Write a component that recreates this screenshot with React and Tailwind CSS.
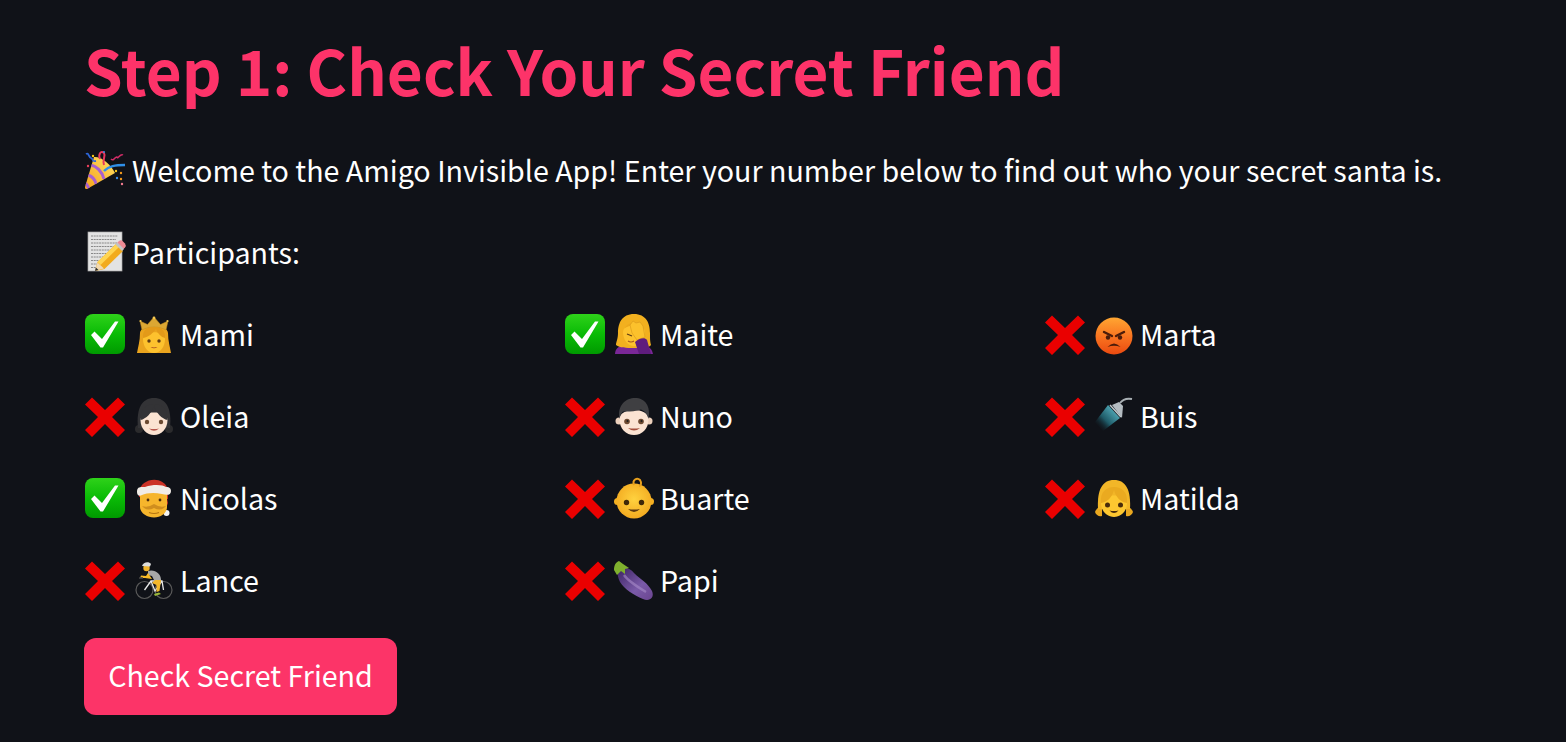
import React from 'react';

const Slot = ({ children }) => (
  <svg viewBox="0 0 40 40" className="w-10 h-10 shrink-0 overflow-visible">{children}</svg>
);

const Check = () => (
  <Slot>
    <defs>
      <linearGradient id="chk" x1="0" y1="0" x2="0" y2="1">
        <stop offset="0" stopColor="#2fd21a" />
        <stop offset="0.5" stopColor="#0abb06" />
        <stop offset="1" stopColor="#009a00" />
      </linearGradient>
    </defs>
    <rect x="0" y="-1" width="40" height="40" rx="8" fill="url(#chk)" />
    <path d="M6 20 L9.500 16.500 L17 24 L30 6.500 L33.500 6.500 L18 32.500 L15.500 32.500 Z" fill="#fff" />
  </Slot>
);

const Cross = () => (
  <Slot>
    <path d="M0 7.500 L7 0.500 L20 13 L33 0.500 L40 7.500 L27 20 L40 33 L33 40 L20 27 L7 40 L0 33 L13 20 Z" fill="#ea0000" />
  </Slot>
);

const Party = () => (
  <Slot>
    <defs>
      <linearGradient id="cone" x1="0" y1="1" x2="1" y2="0">
        <stop offset="0" stopColor="#f5a21b" />
        <stop offset="1" stopColor="#ffe066" />
      </linearGradient>
      <clipPath id="conec"><path d="M0 36 L9 6 C15 5 26 13 30 22 L2 38 Z" /></clipPath>
    </defs>
    <path d="M0 36 Q-0.500 38.500 2 38 L30 22 C26 13 15 5 9 6 Z" fill="url(#cone)" />
    <g clipPath="url(#conec)" stroke="#a85fd0" strokeWidth="3" fill="none">
      <path d="M6 14 C11 15 17 20 19 28" />
      <path d="M3 24 C6 25 10 28 11 33" />
      <path d="M0 32 C2 33 3 35 4 38" />
    </g>
    <path d="M19 20 C24 15 30 14 40 14" stroke="#2f8fe8" strokeWidth="2.400" fill="none" />
    <path d="M1 3 C4 1 3 6 6 7 C9 8 6 11 11 10" stroke="#2d66d8" strokeWidth="1.800" fill="none" />
    <path d="M15 8 C13 3 16 -1 19 2 C21 5 17 9 19 14" stroke="#e8365d" strokeWidth="2" fill="none" />
    <path d="M26 8 C29 11 30 5 32 6 C33 9 35 2 38 4" stroke="#d22d68" strokeWidth="1.500" fill="none" />
    <circle cx="8" cy="5" r="1.200" fill="#f5c518" />
    <circle cx="3" cy="15" r="1.200" fill="#e83f5c" />
    <circle cx="19" cy="1" r="1" fill="#3b8be8" />
    <circle cx="31" cy="20" r="1.200" fill="#f5c518" />
    <circle cx="36" cy="22" r="1.200" fill="#f39a1e" />
    <circle cx="32" cy="27" r="1.200" fill="#3b8be8" />
    <circle cx="36" cy="28" r="1.200" fill="#f39a1e" />
    <circle cx="37" cy="33" r="1.200" fill="#f07a90" />
  </Slot>
);

const Memo = () => (
  <Slot>
    <rect x="3" y="-1" width="34" height="39" fill="#e3e3e3" stroke="#a9a9a9" strokeWidth="0.700" />
    <g stroke="#555" strokeWidth="0.800" strokeDasharray="2 0.700" opacity="0.800">
      <path d="M6 3 H33" />
      <path d="M6 6.500 H31" />
      <path d="M6 10 H32" />
      <path d="M6 13.500 H30" />
      <path d="M6 17 H27" />
      <path d="M6 20.500 H23" />
      <path d="M6 24 H21" />
      <path d="M6 27.500 H18" />
      <path d="M6 31 H14" />
      <path d="M6 34.500 H12" />
    </g>
    <path d="M10 38 L12.500 29 L31 11 L38 18 L19.500 36 Z" fill="#f2ab1d" />
    <path d="M12.500 29 L31 11 L34 14 L15.500 32 Z" fill="#ffd552" />
    <path d="M10 38 L12.500 29.500 L19 35.500 Z" fill="#f2d9b0" />
    <path d="M10 38 L10.900 34.500 L13.500 37 Z" fill="#2f2f2f" />
    <path d="M32 10 L34 8 Q36 6.500 38 8.500 L40 10.500 Q41.500 12.500 40 14.500 L38 16.500 Z" fill="#ee8a93" />
    <path d="M30.500 11.500 L32.500 9.500 L39 16 L37 18 Z" fill="#c4c4c4" />
  </Slot>
);

const Princess = () => (
  <Slot>
    <path d="M6 18 C6 9 34 9 34 18 C34 26 36 32 37 38 H3 C4 32 6 26 6 18 Z" fill="#eaa41e" />
    <path d="M8 15 L6 6 L13.500 9.500 L20 2 L26.500 9.500 L34 6 L32 15 C25 11 15 11 8 15 Z" fill="#dba733" stroke="#c48c1f" strokeWidth="0.500" />
    <circle cx="20" cy="3" r="1.400" fill="#f4c84f" />
    <circle cx="6.500" cy="6" r="1.100" fill="#f4c84f" />
    <circle cx="33.500" cy="6" r="1.100" fill="#f4c84f" />
    <path d="M9 24 C9 15 31 15 31 24 C31 32 26 38 20 38 C14 38 9 32 9 24 Z" fill="#fdc22e" />
    <path d="M9 23 C15 22 19 18 22 14 C24 19 27 22 31 23 C32 15 26 12 20 12 C14 12 8 15 9 23 Z" fill="#e39a19" />
    <circle cx="15" cy="26" r="1.700" fill="#5f3b14" />
    <circle cx="25" cy="26" r="1.700" fill="#5f3b14" />
    <path d="M16.500 32 Q20 34.500 23.500 32 Q20 32.800 16.500 32 Z" fill="#a3441e" />
  </Slot>
);

const GirlDark = () => (
  <Slot>
    <circle cx="5" cy="32" r="4" fill="#2b2b2d" />
    <circle cx="35" cy="32" r="4" fill="#2b2b2d" />
    <path d="M20 1 C8 1 2 11 4 31 L36 31 C38 11 32 1 20 1 Z" fill="#333336" />
    <path d="M6.500 23 C6.500 13 33.500 13 33.500 23 C33.500 32 27 38 20 38 C13 38 6.500 32 6.500 23 Z" fill="#fbe3d2" />
    <path d="M6.500 23 C12 22 18 16 20 8 C22 16 28 22 33.500 23 C34 12 28 7 20 7 C12 7 6 12 6.500 23 Z" fill="#333336" />
    <circle cx="13" cy="25" r="2.200" fill="#6b4a32" />
    <circle cx="27" cy="25" r="2.200" fill="#6b4a32" />
    <path d="M15 31.500 Q20 36 25 31.500 Q20 32.500 15 31.500 Z" fill="#b8594e" />
  </Slot>
);

const Santa = () => (
  <Slot>
    <path d="M5 13 C6 0 28 -5 34 10 L34 20 L5 18 Z" fill="#cb3226" />
    <path d="M31 10 L34 24 L31 32 Z" fill="#cb3226" />
    <circle cx="32.500" cy="34" r="3" fill="#f3f3f3" />
    <path d="M6 14 H33 V28 C33 34 27 38.500 20 38.500 C13 38.500 6 34 6 28 Z" fill="#f6b52c" />
    <path d="M3 13 C3 7 7 8 11 8 C20 5 29 6 32 8 C36 8 37 10 37 12 C37 17 32 16 28 15 C20 13 12 14 8 16 C5 18 3 16 3 13 Z" fill="#f1ece6" />
    <circle cx="14" cy="21" r="1.400" fill="#4b2c0f" />
    <circle cx="26" cy="21" r="1.400" fill="#4b2c0f" />
    <path d="M8 27 Q14 29 20 25 Q26 29 32 27 Q27 33 20 29 Q13 33 8 27 Z" fill="#cf8e1e" />
    <path d="M15 33.500 Q20 35.500 25 33.500" stroke="#b5740f" strokeWidth="1.200" fill="none" />
  </Slot>
);

const Cyclist = () => (
  <Slot>
    <g stroke="#5a5a5a" strokeWidth="1.200" fill="none">
      <circle cx="10.500" cy="29" r="8.500" />
      <circle cx="29.500" cy="29" r="8.500" />
    </g>
    <path d="M10.500 29 L17 20 L28 20 L29.500 29 M17 20 L21 30 L28 20" stroke="#e9e9e9" strokeWidth="1.300" fill="none" />
    <circle cx="12.500" cy="7" r="3.200" fill="#f2b52b" />
    <path d="M8 5 C9 1 15 0 17 3 L16 5.500 Z" fill="#dcdcdc" />
    <path d="M14 10 C20 8 28 12 27 21 L21 21 L18 15 L14 14 Z" fill="#a8a8a8" />
    <path d="M14 12 L18 18 L11 17 L6 17 L7 14.500 L12 15 Z" fill="#f6b925" />
    <path d="M21 19 H27 L25.500 30 L22.500 31 L22.500 24 L18 22 Z" fill="#f3b72b" />
    <path d="M20 33 L25 31.500 L27 33 L21 35 Z" fill="#9ab83a" />
    <path d="M5 17 H9" stroke="#444" strokeWidth="1.600" />
  </Slot>
);

const Facepalm = () => (
  <Slot>
    <path d="M1 39 C1 33 6 30 13 29 L27 29 C33 30 38 33 39 39 Z" fill="#7a2797" />
    <path d="M20 -1 C8 -1 4 8 4 18 C4 24 2 27 2 30 C6 33 12 33 20 33 C28 33 35 33 37 30 C36 26 36 24 36 18 C36 8 32 -1 20 -1 Z" fill="#f2b01f" />
    <path d="M9 17 C9 8 31 8 31 17 C31 26 26 31 20 31 C14 31 9 25 9 17 Z" fill="#fdc22e" />
    <path d="M11 13 C13 7 26 6 29 11 L21 10 C17 10 14 11 11 13 Z" fill="#eda91d" />
    <path d="M16 10 L19 6 L22 8 L26 7 L29 11 L31 22 L23 25 L18 18 Z" fill="#fcc12c" stroke="#dc9c1c" strokeWidth="0.700" />
    <path d="M21 27 C25 23 31 22 33 25 L37 39 L25 39 Z" fill="#5f1c7d" />
    <path d="M13 19 L18 21" stroke="#5f3b14" strokeWidth="1.300" />
    <path d="M14 26 Q17 28 20 26" stroke="#a3541e" strokeWidth="1.100" fill="none" />
  </Slot>
);

const Boy = () => (
  <Slot>
    <circle cx="5" cy="24" r="3.500" fill="#ecd0bc" />
    <circle cx="35" cy="24" r="3.500" fill="#ecd0bc" />
    <path d="M5.500 22 C5.500 10 34.500 10 34.500 22 C34.500 32 28 38 20 38 C12 38 5.500 32 5.500 22 Z" fill="#fbe3d2" />
    <path d="M5.500 22 C3 8 12 1 21 1 C31 1 37 9 34.500 22 C33 17 31 14 27 12.500 C20 15 12 14.500 9 14.500 C7 16 6 19 5.500 22 Z" fill="#3f3f42" />
    <circle cx="13" cy="24.500" r="2.800" fill="#6d4a31" />
    <circle cx="27" cy="24.500" r="2.800" fill="#6d4a31" />
    <circle cx="13.500" cy="24" r="1" fill="#1e1e1e" />
    <circle cx="27.500" cy="24" r="1" fill="#1e1e1e" />
    <path d="M14 31 Q20 36 26 31 Q20 32 14 31 Z" fill="#a44f3c" />
  </Slot>
);

const Baby = () => (
  <Slot>
    <circle cx="3.500" cy="22.500" r="3.500" fill="#f5b021" />
    <circle cx="36.500" cy="22.500" r="3.500" fill="#f5b021" />
    <defs>
      <radialGradient id="babyg" cx="0.5" cy="0.45" r="0.6">
        <stop offset="0" stopColor="#ffd23f" />
        <stop offset="1" stopColor="#f2a71e" />
      </radialGradient>
    </defs>
    <circle cx="20" cy="22" r="17.500" fill="url(#babyg)" />
    <path d="M20 6 C18 1 23 -2 26 1 C28 4 27 7 25 7" stroke="#e8a01d" strokeWidth="2" fill="none" />
    <circle cx="12.500" cy="23.500" r="2.700" fill="#3f2709" />
    <circle cx="27.500" cy="23.500" r="2.700" fill="#3f2709" />
    <path d="M14 30 Q20 36 26 30 Q20 31 14 30 Z" fill="#5e3a10" />
  </Slot>
);

const Eggplant = () => (
  <Slot>
    <defs>
      <linearGradient id="egg" x1="0" y1="0" x2="1" y2="1">
        <stop offset="0" stopColor="#3c2263" />
        <stop offset="0.6" stopColor="#7a5aa8" />
        <stop offset="1" stopColor="#6b4590" />
      </linearGradient>
    </defs>
    <path d="M4 9 C10 5 16 7 20 12 C26 18 34 22 38 30 C41 37 35 41 29 38 C20 34 10 28 6 21 C4 17 3 13 4 9 Z" fill="url(#egg)" />
    <path d="M10 14 C14 20 22 25 32 31" stroke="#a88cc9" strokeWidth="2.400" fill="none" opacity="0.600" />
    <path d="M0 9 C0 4 2 1 5 0 L9 3 L15 7 L11 8 L11 13 L7 10 L3 14 Z" fill="#7fb02e" />
  </Slot>
);

const Angry = () => (
  <Slot>
    <defs>
      <linearGradient id="angry" x1="0" y1="0" x2="0" y2="1">
        <stop offset="0" stopColor="#ffa632" />
        <stop offset="0.55" stopColor="#f8711f" />
        <stop offset="1" stopColor="#ea4a10" />
      </linearGradient>
    </defs>
    <circle cx="20" cy="21" r="18.500" fill="url(#angry)" />
    <path d="M10 17 L18 21" stroke="#4b1c0a" strokeWidth="2.400" strokeLinecap="round" />
    <path d="M30 17 L22 21" stroke="#4b1c0a" strokeWidth="2.400" strokeLinecap="round" />
    <circle cx="14" cy="22.500" r="2.200" fill="#4b1c0a" />
    <circle cx="26" cy="22.500" r="2.200" fill="#4b1c0a" />
    <path d="M13.500 32 Q20 25 26.500 32 Q20 29.500 13.500 32 Z" fill="#4b1c0a" />
  </Slot>
);

const Shower = () => (
  <Slot>
    <defs>
      <linearGradient id="spray" x1="0.900" y1="0.100" x2="0.100" y2="0.900">
        <stop offset="0" stopColor="#5cbccb" />
        <stop offset="0.600" stopColor="#1f5b68" />
        <stop offset="1" stopColor="#0e1117" stopOpacity="0" />
      </linearGradient>
    </defs>
    <path d="M14 8 L26 21 L9 34 L1 25 Z" fill="url(#spray)" />
    <path d="M16 8 L27 20" stroke="#c3ccd0" strokeWidth="1.500" />
    <path d="M18 8 L25 5 L29 9 L28 21 Z" fill="#b4bcc1" />
    <path d="M26 6 C29 2 33 1 38 2" stroke="#a8afb3" strokeWidth="2" fill="none" />
  </Slot>
);

const Girl = () => (
  <Slot>
    <path d="M1 33 C3 28 6 28 8 29 L8 37 C5 38 2 36 1 33 Z" fill="#e9a71f" />
    <path d="M39 33 C37 28 34 28 32 29 L32 37 C35 38 38 36 39 33 Z" fill="#e9a71f" />
    <path d="M20 1 C8 1 3 11 4 30 L36 30 C37 11 32 1 20 1 Z" fill="#f2b628" />
    <path d="M7 24 C7 14 33 14 33 24 C33 32 27 38 20 38 C13 38 7 32 7 24 Z" fill="#fdc730" />
    <path d="M7 24 C13 23 18 19 20 11 C22 19 27 23 33 24 C34 13 28 8 20 8 C12 8 6 13 7 24 Z" fill="#eaaa20" />
    <circle cx="13.500" cy="26" r="2.500" fill="#4a2c0b" />
    <circle cx="26.500" cy="26" r="2.500" fill="#4a2c0b" />
    <path d="M15.500 31.500 Q20 36.500 24.500 31.500 Q20 32.500 15.500 31.500 Z" fill="#4a2c0b" />
  </Slot>
);

const participants = [
  { name: 'Mami', done: true, Icon: Princess },
  { name: 'Maite', done: true, Icon: Facepalm },
  { name: 'Marta', done: false, Icon: Angry },
  { name: 'Oleia', done: false, Icon: GirlDark },
  { name: 'Nuno', done: false, Icon: Boy },
  { name: 'Buis', done: false, Icon: Shower },
  { name: 'Nicolas', done: true, Icon: Santa },
  { name: 'Buarte', done: false, Icon: Baby },
  { name: 'Matilda', done: false, Icon: Girl },
  { name: 'Lance', done: false, Icon: Cyclist },
  { name: 'Papi', done: false, Icon: Eggplant },
];

export default function App() {
  return (
    <div className="h-screen overflow-hidden bg-[#101218] pl-[85px] text-white font-['Noto_Sans_CJK_JP',sans-serif] text-[28.65px]">
      <h1 className="h-[130px] pt-[25px] -ml-px text-[62px] leading-[88px] font-semibold text-[#fd3369]">
        Step 1: Check Your Secret Friend
      </h1>
      <div className="h-[82px] flex items-center">
        <Party />
        <span className="ml-[7px] pb-[2px]">Welcome to the Amigo Invisible App! Enter your number below to find out who your secret santa is.</span>
      </div>
      <div className="h-[82px] flex items-center">
        <Memo />
        <span className="ml-[7px] pb-[2px]">Participants:</span>
      </div>
      <div className="grid grid-cols-[480px_480px_480px] auto-rows-[82px]">
        {participants.map(({ name, done, Icon }) => (
          <div key={name} className="flex items-center">
            {done ? <Check /> : <Cross />}
            <span className="ml-[9px]"><Icon /></span>
            <span className="ml-[6px] pb-[2px]">{name}</span>
          </div>
        ))}
      </div>
      <button className="mt-4 -ml-px w-[313px] h-[77px] pb-[3px] rounded-xl bg-[#fc3468] text-white text-[28.65px] flex items-center justify-center">
        Check Secret Friend
      </button>
    </div>
  );
}
